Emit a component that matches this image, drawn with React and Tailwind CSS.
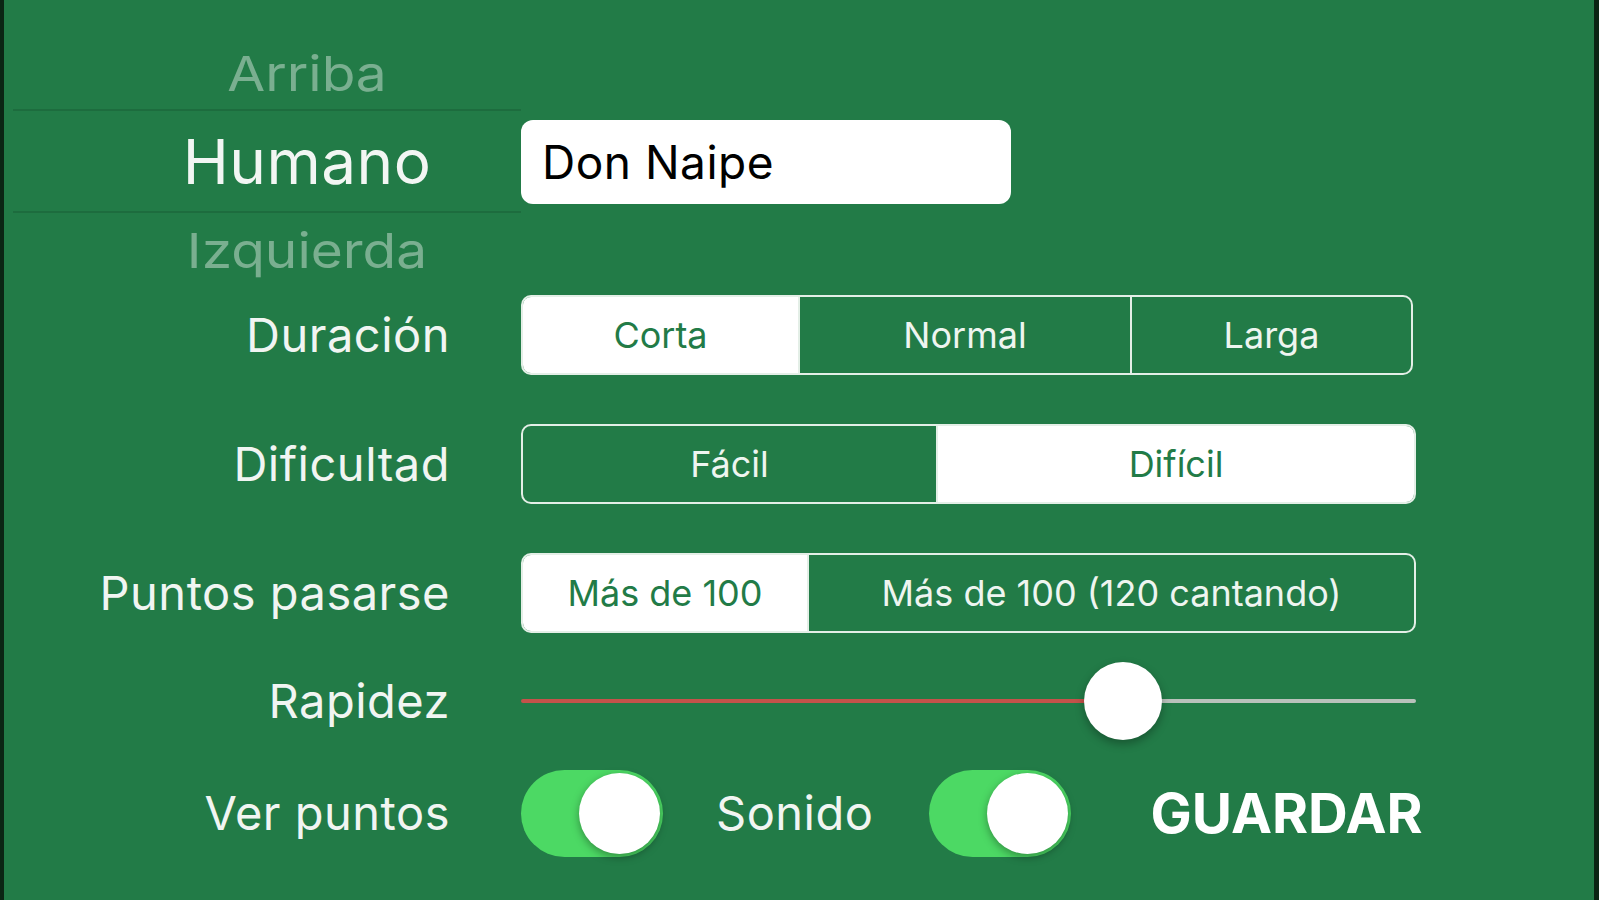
import React from "react";

function Segmented({ items, width }) {
  return (
    <div
      className="flex h-[80px] overflow-hidden rounded-[10px] border-2 border-[#e4efe7]"
      style={{ width }}
    >
      {items.map((it, i) => (
        <div
          key={it.label}
          className={
            (it.w ? "flex-none " : "flex-1 ") +
            (i > 0 ? "border-l-2 border-[#e4efe7] " : "") +
            (it.sel ? "bg-white text-[#227b47] " : "text-[#eef5f0] ") +
            "flex items-center justify-center text-[36px]"
          }
          style={it.w ? { width: it.w } : undefined}
        >
          {it.label}
        </div>
      ))}
    </div>
  );
}

function Switch() {
  return (
    <div className="flex h-[87px] w-[142px] flex-none items-center justify-end rounded-full bg-[#4cd964] pr-[3px]">
      <div className="h-[81px] w-[81px] rounded-full bg-white shadow-[0_3px_8px_rgba(0,0,0,0.35)]" />
    </div>
  );
}

function Row({ label, children, h = "h-[80px]" }) {
  return (
    <div className={"flex items-center " + h}>
      <div className="w-[446px] flex-none text-right text-[47px] tracking-[0.5px] text-[#f1f5f2]">{label}</div>
      <div className="ml-[71px] flex items-center">{children}</div>
    </div>
  );
}

export default function App() {
  return (
    <div
      className="flex h-[900px] w-full overflow-hidden"
      style={{ fontFamily: "Inter, 'Liberation Sans', sans-serif" }}
    >
      <div className="w-[4px] flex-none bg-[#0b2514]" />
      <div className="flex-1 bg-[#227b47]">
        {/* picker + name field */}
        <div className="flex h-[288px] items-start">
          <div className="ml-[9px] flex w-[508px] flex-none flex-col pt-[38px]">
            <div className="flex h-[71px] items-center justify-center pl-[80px] text-[55px] text-white/40">
              <span className="scale-y-[0.88]">Arriba</span>
            </div>
            <div className="flex h-[104px] items-center justify-center border-y-2 border-[#1d6c3e] pl-[80px] text-[62px] tracking-[0.5px] text-[#f2f6f3]">
              Humano
            </div>
            <div className="flex h-[75px] items-center justify-center pl-[80px] text-[55px] text-white/40">
              <span className="scale-y-[0.88]">Izquierda</span>
            </div>
          </div>
          <div className="mt-[120px] flex h-[84px] w-[490px] flex-none items-center rounded-[12px] bg-white pl-[21px] text-[46px] tracking-[0.5px] text-black">
            Don Naipe
          </div>
        </div>

        <div className="mt-[7px] flex flex-col">
          <Row label="Duración">
            <Segmented
              width={892}
              items={[
                { label: "Corta", w: 275, sel: true },
                { label: "Normal", w: 332 },
                { label: "Larga" },
              ]}
            />
          </Row>
          <div className="mt-[49px]">
            <Row label="Dificultad">
              <Segmented
                width={895}
                items={[
                  { label: "Fácil", w: 413 },
                  { label: "Difícil", sel: true },
                ]}
              />
            </Row>
          </div>
          <div className="mt-[49px]">
            <Row label="Puntos pasarse">
              <Segmented
                width={895}
                items={[
                  { label: "Más de 100", w: 284, sel: true },
                  { label: "Más de 100 (120 cantando)" },
                ]}
              />
            </Row>
          </div>
          <div className="mt-[28px]">
            <Row label="Rapidez">
              <div className="flex h-[80px] w-[895px] items-center">
                <div className="h-[4px] w-[602px] flex-none rounded-l-full bg-[#c4524a]" />
                <div className="relative z-10 -mx-[39px] h-[78px] w-[78px] flex-none rounded-full bg-white shadow-[0_4px_10px_rgba(0,0,0,0.3)]" />
                <div className="h-[4px] flex-1 rounded-r-full bg-[#b9c1bb]" />
              </div>
            </Row>
          </div>
          <div className="mt-[29px]">
            <Row label="Ver puntos" h="h-[87px]">
              <Switch />
              <div className="ml-[53px] text-[47px] tracking-[0.5px] text-[#f1f5f2]">Sonido</div>
              <div className="ml-[56px]">
                <Switch />
              </div>
              <div className="ml-[79px] text-[55px] font-bold text-white">GUARDAR</div>
            </Row>
          </div>
        </div>
      </div>
      <div className="w-[5px] flex-none bg-[#0b2514]" />
    </div>
  );
}
